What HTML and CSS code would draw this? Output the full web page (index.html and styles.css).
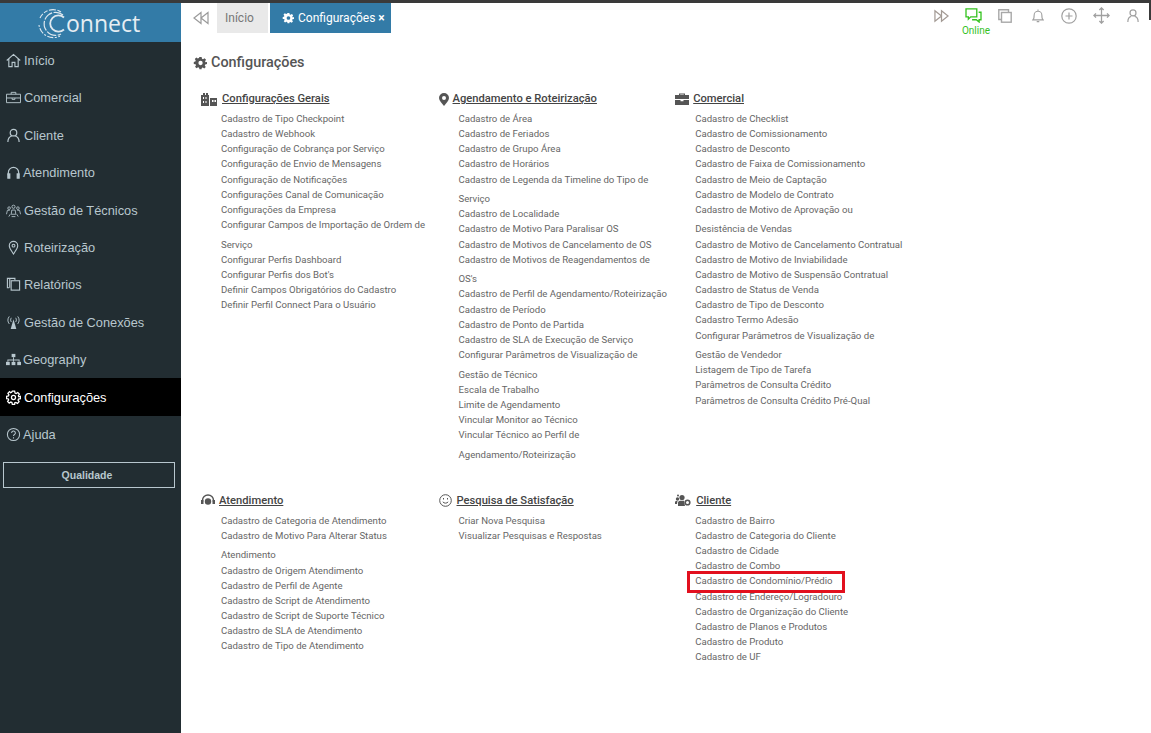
FILE: index.html
```html
<!DOCTYPE html>
<html lang="en">
<head>
  <meta charset="UTF-8" />
  <title>Configurações</title>
  <link rel="stylesheet" href="styles.css">
</head>
<body>
  <svg class="defs" width="0" height="0">
    <symbol id="gear" viewBox="0 0 24 24">
      <path d="M10 1h4l.7 3.300 1.900.8 2.800-1.800 2.800 2.800-1.800 2.800.8 1.900L24 10v4l-3.300.7-.8 1.900 1.800 2.800-2.800 2.800-2.800-1.800-1.900.8L14 24h-4l-.7-3.300-1.900-.8-2.800 1.800-2.800-2.800 1.800-2.800-.8-1.900L-1 14v-4l3.300-.7.8-1.900L1.300 4.600 4.100 1.800l2.800 1.800 1.900-.8zM12 8a4 4 0 1 0 0 8 4 4 0 0 0 0-8z" fill-rule="evenodd"/>
    </symbol>
  </svg>
  <div class="edge"></div>

  <aside class="sidebar">
    <div class="logo">
      <svg class="logo-mark" width="30" height="34" viewBox="0 0 30 34" fill="none" stroke="#dfe9f0">
        <path d="M24 6A14.500 14.500 0 0 0 3 12" stroke-width="1.100" stroke-dasharray="4 1.500 7 1.500"/>
        <path d="M2 19a14.500 14.500 0 0 0 21 11" stroke-width="1.100" stroke-dasharray="2 1.500 6 1.500"/>
        <path d="M26 9A11.500 11.500 0 1 0 24 28" stroke-width="1.200" stroke-dasharray="10 1.500"/>
        <path d="M27 11.500A8.200 8.200 0 1 0 27 23.500" stroke-width="1.800"/>
      </svg>
      <span class="logo-text">onnect</span>
    </div>
    <nav class="menu">
      <a class="menu-item">
        <svg width="15" height="15" viewBox="0 0 16 16" fill="none" stroke="currentColor" stroke-width="1.200"><path d="M.8 8L8 1.500 15.200 8M3 6.500V14.500h3.500v-4.500h3v4.500H13V6.500"/></svg>
        Início</a>
      <a class="menu-item">
        <svg width="15" height="15" viewBox="0 0 16 16" fill="none" stroke="currentColor"><path d="M.5 4.500h15v9H.5zM.5 8.500h15M5.500 4.500v-2h5v2M6.500 8.500v1.500h3V8.500"/></svg>
        Comercial</a>
      <a class="menu-item">
        <svg width="15" height="15" viewBox="0 0 16 16" fill="none" stroke="currentColor" stroke-width="1.300"><circle cx="8" cy="5" r="3.500"/><path d="M2 15c0-4 2.500-6 4-6.500M14 15c0-4-2.500-6-4-6.500"/></svg>
        Cliente</a>
      <a class="menu-item tight">
        <svg width="15" height="15" viewBox="0 0 16 16" fill="none" stroke="currentColor" stroke-width="1.300"><path d="M2.500 11V8a5.500 5.500 0 0 1 11 0v3"/><rect x="2" y="9.500" width="2" height="4.500" fill="currentColor"/><rect x="12" y="9.500" width="2" height="4.500" fill="currentColor"/></svg>
        Atendimento</a>
      <a class="menu-item">
        <svg width="15" height="15" viewBox="0 0 16 16" fill="none" stroke="currentColor" stroke-width=".9"><circle cx="8" cy="4" r="1.700"/><circle cx="3.300" cy="5.500" r="1.400"/><circle cx="12.700" cy="5.500" r="1.400"/><path d="M5.500 12l.7-4.500h3.600l.7 4.500zM.5 12l1-4.200h2.500M15.500 12l-1-4.200H12M3 14.500l1.500-2.500M13 14.500L11.500 12M6 14.500h4"/></svg>
        Gestão de Técnicos</a>
      <a class="menu-item">
        <svg width="15" height="15" viewBox="0 0 16 16" fill="none" stroke="currentColor" stroke-width="1.200"><path d="M8 15C5.500 11 3.500 8.500 3.500 6a4.500 4.500 0 0 1 9 0c0 2.500-2 5-4.500 9z"/><circle cx="8" cy="6" r="1.500"/></svg>
        Roteirização</a>
      <a class="menu-item">
        <svg width="15" height="15" viewBox="0 0 16 16" fill="none" stroke="currentColor" stroke-width="1.200"><path d="M3.500 11.500H1.500v-10h8v2"/><path d="M4 1.500v10"/><rect x="5.500" y="4" width="9" height="10"/></svg>
        Relatórios</a>
      <a class="menu-item">
        <svg width="15" height="15" viewBox="0 0 16 16" fill="none" stroke="currentColor"><path d="M3.500 1.500C1.500 4 1.500 7 3.500 9.500M12.500 1.500c2 2.500 2 5.500 0 8M5.700 3C4.700 4.500 4.700 6 5.700 7.500M10.300 3c1 1.500 1 3 0 4.500"/><path d="M8 4.500l-3 10.500h6z" fill="currentColor" stroke="none"/></svg>
        Gestão de Conexões</a>
      <a class="menu-item tight">
        <svg width="15" height="15" viewBox="0 0 16 16" fill="currentColor"><rect x="6" y="2" width="4" height="3.500"/><rect x="0" y="10.500" width="4" height="3.500"/><rect x="6" y="10.500" width="4" height="3.500"/><rect x="12" y="10.500" width="4" height="3.500"/><path d="M7.500 5.500h1v2.500h6v2.500h-1V9h-5v1.500h-1V9h-5v1.500h-1V8h6z"/></svg>
        Geography</a>
      <a class="menu-item active">
        <svg width="15" height="15" viewBox="-1 -1 26 26" fill="none" stroke="currentColor" stroke-width="2.200"><circle cx="12" cy="12" r="3.500"/><path d="M10 1h4l.7 3.300 1.900.8 2.800-1.800 2.800 2.800-1.800 2.800.8 1.900L24 10v4l-3.300.7-.8 1.900 1.800 2.800-2.800 2.800-2.800-1.800-1.900.8L14 24h-4l-.7-3.300-1.900-.8-2.800 1.800-2.800-2.800 1.800-2.800-.8-1.900L0 14v-4l3.300-.7.8-1.900L2.300 4.600 5.100 1.800l1.800 1.800 1.900-.8z"/></svg>
        Configurações</a>
      <a class="menu-item tight">
        <svg width="15" height="15" viewBox="0 0 16 16" fill="none" stroke="currentColor" stroke-width="1.100"><circle cx="8" cy="8" r="6.500"/><path d="M6 6.300a2 2 0 1 1 3 1.700c-.8.500-1 .8-1 1.700M8 11v1.200"/></svg>
        Ajuda</a>
    </nav>
    <button class="quality-btn">Qualidade</button>
  </aside>

  <main class="content">
    <header class="topbar">
      <svg class="collapse" width="16" height="14" viewBox="0 0 16 14" fill="none" stroke="#9a9a9a" stroke-width="1.200"><path d="M8 1.500L1 7l7 5.500zM15 1.500L8 7l7 5.500z"/></svg>
      <div class="tab">Início</div>
      <div class="tab tab-active">
        <svg width="12" height="12"  viewBox="-1 0 26 24" fill="#fff"><use href="#gear"/></svg>
        Configurações <span class="tab-close">×</span>
      </div>
      <div class="top-icons">
        <svg class="icon-forward" width="15" height="14" viewBox="0 0 16 14" fill="none" stroke="#a39a94" stroke-width="1.300"><path d="M1 1.500L8 7l-7 5.500zM8 1.500L15 7l-7 5.500z"/></svg>
        <div class="online">
          <svg width="17" height="15" viewBox="0 0 18 16" fill="none" stroke="#35c21f" stroke-width="1.400"><path d="M1 1h11.500v8.500H6L3.500 12V9.500H1z"/><path d="M14.500 4.500H17v8h-2v2.500L12 12.500H7.500"/></svg>
          <span>Online</span>
        </div>
        <svg class="icon-copy" width="14" height="14" viewBox="0 0 14 14" fill="none" stroke="#a8a8a8" stroke-width="1.400"><path d="M3.500 10.500H.8V.8h9.700v2.700"/><rect x="3.500" y="3.500" width="9.700" height="9.700"/></svg>
        <svg class="icon-bell" width="12" height="16" viewBox="0 0 14 16" fill="none" stroke="#a0a0a0" stroke-width="1.300"><path d="M1 12.500c1.500-1 1.500-2.500 1.500-5.500a4.500 4.500 0 0 1 9 0c0 3 0 4.500 1.500 5.500zM5.500 14.500h3M7 .5v2"/></svg>
        <svg class="icon-plus" width="16" height="16" viewBox="0 0 16 16" fill="none" stroke="#a0a0a0" stroke-width="1.200"><circle cx="8" cy="8" r="7.200"/><path d="M8 4.500v7M4.500 8h7"/></svg>
        <svg class="icon-move" width="17" height="17" viewBox="0 0 16 16" fill="none" stroke="#a0a0a0" stroke-width="1.200"><path d="M8 .8v14.400M.8 8h14.400M6 2.800L8 .8l2 2M6 13.200l2 2 2-2M2.800 6l-2 2 2 2M13.200 6l2 2-2 2"/></svg>
        <svg class="icon-user" width="12" height="15" viewBox="0 0 14 15" fill="none" stroke="#a0a0a0" stroke-width="1.400"><circle cx="7" cy="4.500" r="3.500"/><path d="M1 15c0-4 2-6 4-6.500M13 15c0-4-2-6-4-6.500"/></svg>
      </div>
    </header>

    <h1 class="page-title"><svg width="14" height="14" viewBox="-1 0 26 24" fill="#555"><use href="#gear"/></svg>Configurações</h1>

    <div class="sections">
      <section class="section">
        <h2 class="section-title">
          <svg class="section-icon" width="16" height="13" viewBox="0 0 16 13" fill="#555"><path d="M0 13V2h2V0h2v2h1V0h2v2h1v11zM9 13V5h7v8z"/><path d="M2 4h1v2H2zM4.500 4h1v2h-1zM2 8h1v2H2zM4.500 8h1v2h-1zM11 7h1.500v2H11zM13.500 7H15v2h-1.500z" fill="#fff"/></svg>
          <span>Configurações Gerais</span>
        </h2>
        <ul class="links">
          <li>Cadastro de Tipo Checkpoint</li>
          <li>Cadastro de Webhook</li>
          <li>Configuração de Cobrança por Serviço</li>
          <li>Configuração de Envio de Mensagens</li>
          <li>Configuração de Notificações</li>
          <li>Configurações Canal de Comunicação</li>
          <li>Configurações da Empresa</li>
          <li>Configurar Campos de Importação de Ordem de Serviço</li>
          <li>Configurar Perfis Dashboard</li>
          <li>Configurar Perfis dos Bot's</li>
          <li>Definir Campos Obrigatórios do Cadastro</li>
          <li>Definir Perfil Connect Para o Usuário</li>
        </ul>
      </section>
      <section class="section">
        <h2 class="section-title snug">
          <svg class="section-icon" width="10" height="13" viewBox="0 0 10 13" fill="#555"><path d="M5 0a5 5 0 0 1 5 5c0 2.500-3 5.500-5 8-2-2.500-5-5.500-5-8a5 5 0 0 1 5-5zm0 3a2 2 0 1 0 0 4 2 2 0 0 0 0-4z" fill-rule="evenodd"/></svg>
          <span>Agendamento e Roteirização</span>
        </h2>
        <ul class="links">
          <li>Cadastro de Área</li>
          <li>Cadastro de Feriados</li>
          <li>Cadastro de Grupo Área</li>
          <li>Cadastro de Horários</li>
          <li>Cadastro de Legenda da Timeline do Tipo de Serviço</li>
          <li>Cadastro de Localidade</li>
          <li>Cadastro de Motivo Para Paralisar OS</li>
          <li>Cadastro de Motivos de Cancelamento de OS</li>
          <li>Cadastro de Motivos de Reagendamentos de OS's</li>
          <li>Cadastro de Perfil de Agendamento/Roteirização</li>
          <li>Cadastro de Período</li>
          <li>Cadastro de Ponto de Partida</li>
          <li>Cadastro de SLA de Execução de Serviço</li>
          <li>Configurar Parâmetros de Visualização de Gestão de Técnico</li>
          <li>Escala de Trabalho</li>
          <li>Limite de Agendamento</li>
          <li>Vincular Monitor ao Técnico</li>
          <li>Vincular Técnico ao Perfil de Agendamento/Roteirização</li>
        </ul>
      </section>
      <section class="section">
        <h2 class="section-title snug">
          <svg class="section-icon" width="14" height="12" viewBox="0 0 14 12" fill="#555"><path d="M4 2V.5h6V2h4v4H0V2zm1.200 0h3.600V1.500H5.200zM0 7h5.500v1.200h3V7H14v5H0z" fill-rule="evenodd"/></svg>
          <span>Comercial</span>
        </h2>
        <ul class="links links-short">
          <li>Cadastro de Checklist</li>
          <li>Cadastro de Comissionamento</li>
          <li>Cadastro de Desconto</li>
          <li>Cadastro de Faixa de Comissionamento</li>
          <li>Cadastro de Meio de Captação</li>
          <li>Cadastro de Modelo de Contrato</li>
          <li>Cadastro de Motivo de Aprovação ou Desistência de Vendas</li>
          <li>Cadastro de Motivo de Cancelamento Contratual</li>
          <li>Cadastro de Motivo de Inviabilidade</li>
          <li>Cadastro de Motivo de Suspensão Contratual</li>
          <li>Cadastro de Status de Venda</li>
          <li>Cadastro de Tipo de Desconto</li>
          <li>Cadastro Termo Adesão</li>
          <li>Configurar Parâmetros de Visualização de Gestão de Vendedor</li>
          <li>Listagem de Tipo de Tarefa</li>
          <li>Parâmetros de Consulta Crédito</li>
          <li>Parâmetros de Consulta Crédito Pré-Qual</li>
        </ul>
      </section>
      <section class="section">
        <h2 class="section-title snug">
          <svg class="section-icon" width="14" height="14" viewBox="0 0 14 14" fill="none" stroke="#555" stroke-width="1.400"><path d="M1.500 8V6.500a5.500 5.500 0 0 1 11 0V8"/><circle cx="7" cy="7.500" r="3.200" fill="#555" stroke="none"/><rect x="0" y="6" width="2.500" height="4" fill="#555" stroke="none"/><rect x="11.500" y="6" width="2.500" height="4" fill="#555" stroke="none"/></svg>
          <span>Atendimento</span>
        </h2>
        <ul class="links">
          <li>Cadastro de Categoria de Atendimento</li>
          <li>Cadastro de Motivo Para Alterar Status Atendimento</li>
          <li>Cadastro de Origem Atendimento</li>
          <li>Cadastro de Perfil de Agente</li>
          <li>Cadastro de Script de Atendimento</li>
          <li>Cadastro de Script de Suporte Técnico</li>
          <li>Cadastro de SLA de Atendimento</li>
          <li>Cadastro de Tipo de Atendimento</li>
        </ul>
      </section>
      <section class="section">
        <h2 class="section-title">
          <svg class="section-icon" width="13" height="13" viewBox="0 0 13 13" fill="none" stroke="#555"><circle cx="6.500" cy="6.500" r="5.800"/><path d="M3.800 7.800c1.200 1.800 4.200 1.800 5.400 0"/><path d="M4.500 4v1.500M8.500 4v1.500"/></svg>
          <span>Pesquisa de Satisfação</span>
        </h2>
        <ul class="links">
          <li>Criar Nova Pesquisa</li>
          <li>Visualizar Pesquisas e Respostas</li>
        </ul>
      </section>
      <section class="section">
        <h2 class="section-title">
          <svg class="section-icon" width="16" height="13" viewBox="0 0 16 13" fill="#555"><circle cx="7" cy="3.500" r="2.600"/><circle cx="2.500" cy="5" r="1.700"/><circle cx="3" cy="1.500" r="1"/><path d="M3 12V8.500a2.500 2.500 0 0 1 2-1.800h4l1 5.300zM0 10V8.200c0-.8.800-1.200 1.500-1.200h1L2 10z"/><circle cx="12.500" cy="8.500" r="2.300" fill="none" stroke="#555" stroke-width="1.600"/></svg>
          <span>Cliente</span>
        </h2>
        <ul class="links">
          <li>Cadastro de Bairro</li>
          <li>Cadastro de Categoria do Cliente</li>
          <li>Cadastro de Cidade</li>
          <li>Cadastro de Combo</li>
          <li class="marked">Cadastro de Condomínio/Prédio</li>
          <li>Cadastro de Endereço/Logradouro</li>
          <li>Cadastro de Organização do Cliente</li>
          <li>Cadastro de Planos e Produtos</li>
          <li>Cadastro de Produto</li>
          <li>Cadastro de UF</li>
        </ul>
      </section>
    </div>
  </main>
</body>
</html>
```

FILE: styles.css
```css
html, body {
  height: 100%;
}
body {
  margin: 0;
  display: flex;
  height: 733px;
  overflow: hidden;
  box-sizing: border-box;
  border-top: 3px solid #3a3a3a;
  font-family: Roboto, sans-serif;
  background: #fff;
}
.defs {
  position: absolute;
}
.edge {
  position: absolute;
  top: 0;
  right: 0;
  width: 2px;
  height: 20px;
  background: #3a3a3a;
}
.sidebar {
  width: 181px;
  flex: none;
  background: #222d32;
  display: flex;
  flex-direction: column;
}
.logo {
  height: 38.800px;
  background: #337ba7;
  display: flex;
  align-items: center;
  padding-left: 37px;
}
.logo-mark {
  margin-top: 1px;
  margin-right: -1px;
}
.logo-text {
  font-family: "Open Sans", sans-serif;
  font-size: 23px;
  color: #e6eef3;
  margin-top: 1px;
}
.menu {
  display: flex;
  flex-direction: column;
}
.menu-item {
  height: 37.400px;
  display: flex;
  align-items: center;
  gap: 3px;
  padding-left: 6px;
  font-family: "Liberation Sans", sans-serif;
  font-size: 12.800px;
  color: #b8c7ce;
}
.menu-item.tight {
  gap: 2px;
}
.menu-item.active {
  background: #000;
  color: #fff;
}
.quality-btn {
  margin: 9px 6px 0 3px;
  height: 26px;
  padding: 0 10px 0 6px;
  background: transparent;
  border: 1px solid #b8c7ce;
  color: #b8c7ce;
  font-family: "Liberation Sans", sans-serif;
  font-size: 10.500px;
  font-weight: bold;
}
.content {
  flex: 1;
  min-width: 0;
}
.topbar {
  height: 30px;
  display: flex;
  align-items: flex-start;
  padding-left: 12px;
  position: relative;
}
.collapse {
  margin: 8px 8px 0 0;
}
.tab {
  height: 30px;
  line-height: 31px;
  padding: 0 14px 0 8px;
  background: #e9e9e9;
  color: #777;
  font-size: 12px;
  width: 29px;
  margin-right: 2px;
}
.tab-active {
  width: 121px;
  box-sizing: border-box;
  padding: 0 0 0 12px;
  margin: 0;
  background: #337ba7;
  color: #fff;
  display: flex;
  align-items: center;
  gap: 4px;
}
.tab-close {
  font-weight: bold;
  margin-left: -1px;
}
.top-icons {
  position: absolute;
  top: 5px;
  left: 753px;
  display: flex;
  align-items: flex-start;
  gap: 16px;
}
.icon-forward, .icon-copy {
  margin-top: 1px;
}
.icon-bell {
  margin-left: 4px;
}
.icon-plus {
  margin-left: 1px;
}
.icon-move {
  margin-top: -1px;
}
.icon-user {
  margin-left: 1px;
}
.online {
  width: 17px;
  display: flex;
  flex-direction: column;
  align-items: center;
  color: #35c21f;
  font-size: 10px;
  white-space: nowrap;
}
.online span {
  margin: 2px 0 0 5px;
}
.page-title {
  margin: 21px 0 0 12px;
  font-size: 14.400px;
  font-weight: 500;
  color: #555;
  display: flex;
  align-items: center;
  gap: 4px;
  line-height: 18px;
}
.sections {
  display: grid;
  grid-template-columns: 237.500px 236.700px 237px;
  padding: 18px 0 0 19px;
}
.section {
  padding-bottom: 32px;
}
.section-title {
  margin: 0;
  display: flex;
  align-items: center;
  gap: 5px;
  font-size: 11.200px;
  font-weight: 500;
  color: #444;
  line-height: 18px;
}
.section-title.snug {
  gap: 4px;
}
.section-icon {
  margin-left: 1px;
}
.section-title span {
  text-decoration: underline;
}
.links {
  list-style: none;
  margin: 1px 0 0 21px;
  padding: 0;
  width: 210px;
  font-size: 9.600px;
  color: #666;
}
.links-short {
  width: 208px;
}
.links li {
  line-height: 19.500px;
  margin-bottom: -4.350px;
}
.marked {
  position: relative;
}
.marked::after {
  content: "";
  position: absolute;
  left: -8px;
  top: 0;
  width: 158px;
  height: 22px;
  box-sizing: border-box;
  border: 3px solid #e2101e;
}
```
